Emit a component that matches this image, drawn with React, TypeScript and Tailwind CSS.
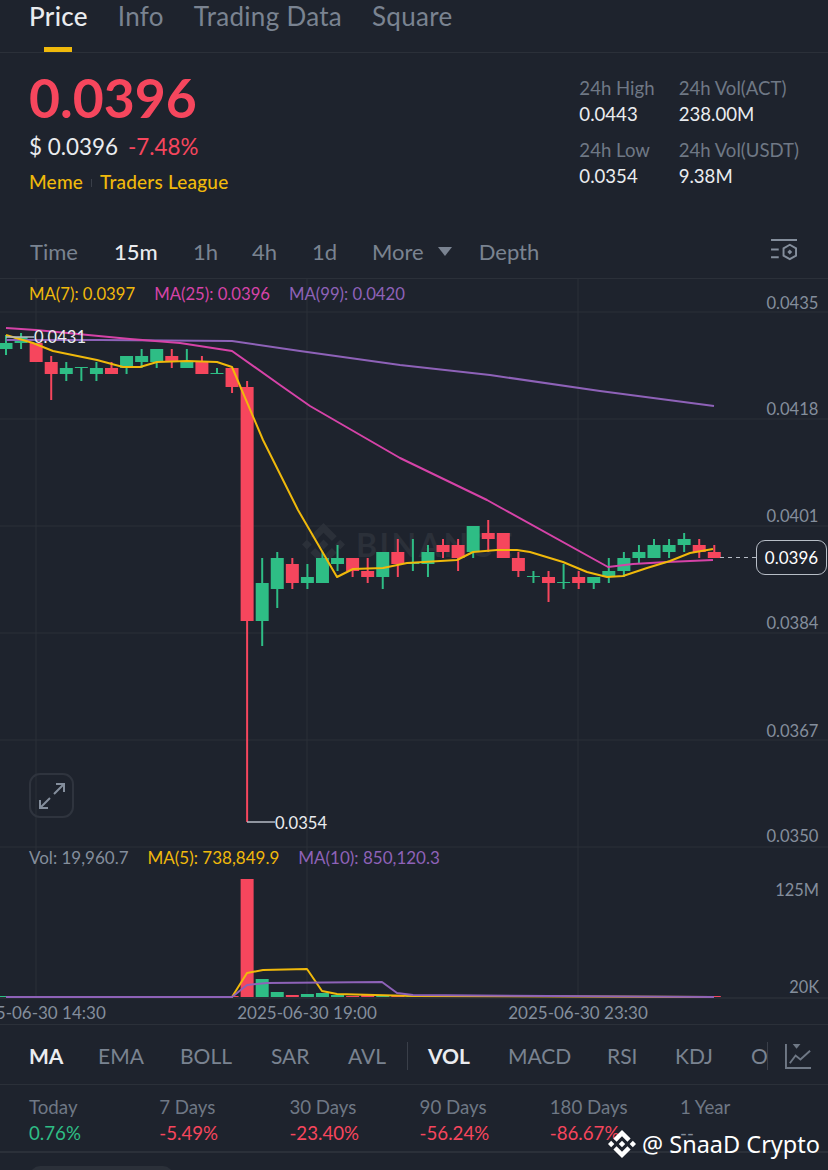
import React from 'react';

const UP = '#2ebd85';
const DOWN = '#f6465d';

// [up?, wick top, body top, body bottom, wick bottom]
const candles: [boolean, number, number, number, number][] = [
  [true, 335, 343, 349, 355],
  [true, 333, 337, 343, 349],
  [false, 343, 343, 362, 362],
  [false, 356, 362, 374, 400],
  [true, 362, 368, 374, 381],
  [true, 367, 367, 368, 381],
  [true, 362, 368, 374, 381],
  [false, 362, 368, 374, 374],
  [true, 356, 356, 368, 374],
  [true, 349, 356, 362, 368],
  [true, 349, 349, 362, 368],
  [false, 349, 356, 362, 368],
  [true, 349, 362, 368, 368],
  [false, 356, 362, 374, 374],
  [true, 368, 373, 374, 374],
  [false, 368, 368, 387, 393],
  [false, 381, 387, 621, 822],
  [true, 558, 583, 621, 646],
  [true, 552, 558, 589, 608],
  [false, 558, 564, 583, 589],
  [true, 564, 577, 583, 589],
  [true, 552, 558, 583, 583],
  [true, 545, 558, 564, 571],
  [false, 558, 558, 571, 577],
  [false, 558, 571, 577, 583],
  [true, 552, 552, 577, 589],
  [false, 539, 552, 564, 577],
  [true, 539, 563, 564, 571],
  [true, 545, 552, 564, 577],
  [false, 539, 545, 552, 558],
  [false, 539, 545, 558, 571],
  [true, 526, 526, 552, 558],
  [false, 520, 533, 539, 552],
  [false, 533, 533, 558, 558],
  [false, 552, 558, 571, 577],
  [true, 571, 576, 577, 583],
  [false, 571, 577, 583, 602],
  [true, 564, 582, 583, 589],
  [false, 571, 577, 583, 589],
  [true, 577, 577, 583, 589],
  [true, 558, 571, 577, 583],
  [true, 552, 558, 571, 577],
  [true, 545, 552, 558, 564],
  [true, 539, 545, 558, 558],
  [true, 539, 545, 552, 558],
  [true, 533, 539, 545, 552],
  [false, 539, 545, 552, 558],
  [false, 545, 552, 558, 558],
];

// height of each volume bar above the baseline
const volumes = [1, 1, 1, 1, 1, 1, 1, 1, 1, 1, 1, 1, 1, 1, 1, 1, 118, 18, 5, 2, 3, 4, 2, 1, 2, 2, 1, 1, 2, 2, 1, 1, 2, 2, 2, 1, 1, 1, 1, 1, 1, 1, 1, 1, 1, 1, 1, 1];

const cx = (i: number) => 6 + i * 15.07;

const ma7 = '6,335 33,343 53,351 97,360 123,367 140,367 157,362 187,361 217,362 232,367 263,440 298,510 337,577 353,569 383,568 407,563 457,560 473,552 497,550 517,550 530,552 563,562 587,572 607,577 623,576 647,568 670,561 690,553 713,549';
const ma25 = '6,328 36,330 130,339 180,343 232,351 280,385 310,406 400,458 487,500 505,510 608,567 633,564 667,562 713,560';
const ma99 = '6,340 100,340 232,341 300,351 400,365 490,375 600,391 714,406';
const volMa5 = '6,997 232,997 247,973 263,970 307,969 322,991 337,994 413,996 714,997';
const volMa10 = '6,997 232,997 247,985 267,983 382,982 397,993 413,995 714,997';

const gridY = [312, 419, 526, 633, 740, 847];
const gridX = [36, 307, 578];
const priceLabels: [string, number][] = [
  ['0.0435', 309],
  ['0.0418', 415],
  ['0.0401', 522],
  ['0.0384', 629],
  ['0.0367', 737],
  ['0.0350', 842],
];

const logoPath = 'M38.73 53.2l24.59-24.58 24.6 24.6 14.3-14.31L63.32 0 24.43 38.9zM0 63.31l14.3-14.31 14.31 14.31-14.31 14.3zM38.73 73.41l24.59 24.59 24.6-24.6 14.31 14.29-38.9 38.91-38.91-38.88zM98 63.31l14.3-14.31 14.31 14.3-14.31 14.32zM77.83 63.3L63.32 48.78 48.81 63.28l14.51 14.5z';

function Chart() {
  return (
    <div className="relative h-[746px] border-b border-[#2b3039]">
      <svg viewBox="0 279 828 745" className="block w-[828px] h-[745px]">
        {gridY.map(y => (
          <line key={y} x1={0} x2={828} y1={y} y2={y} stroke="#2b3039" />
        ))}
        <line x1={0} x2={828} y1={998} y2={998} stroke="#2b3039" strokeWidth={1.5} />
        {gridX.map(x => (
          <line key={x} x1={x} x2={x} y1={279} y2={998} stroke="#2b3039" />
        ))}

        {/* faint watermark behind the candles */}
        <path d={logoPath} fill="#2b3039" transform="translate(302 523) scale(0.34)" />
        <text x={356} y={557} fill="#2b3039" fontSize={32} fontWeight={700} letterSpacing={2.5}>BINANCE</text>

        {candles.map(([up, top, bodyTop, bodyBottom, bottom], i) => {
          const color = up ? UP : DOWN;
          return (
            <g key={i}>
              <line x1={cx(i)} x2={cx(i)} y1={top} y2={bottom} stroke={color} strokeWidth={2} />
              <rect x={cx(i) - 6.5} y={bodyTop} width={13} height={Math.max(bodyBottom - bodyTop, 1)} fill={color} />
            </g>
          );
        })}

        <polyline points={ma99} fill="none" stroke="#8e62b8" strokeWidth={2} strokeLinejoin="round" />
        <polyline points={ma25} fill="none" stroke="#d643a8" strokeWidth={2} strokeLinejoin="round" />
        <polyline points={ma7} fill="none" stroke="#f0b90b" strokeWidth={2} strokeLinejoin="round" />

        {/* high / low markers */}
        <line x1={6} x2={34} y1={337} y2={337} stroke="#b7bdc6" strokeWidth={1.5} />
        <text x={34} y={342.5} fill="#eaecef" fontSize={16.6}>0.0431</text>
        <line x1={247} x2={275} y1={822} y2={822} stroke="#b7bdc6" strokeWidth={1.5} />
        <text x={275} y={829} fill="#eaecef" fontSize={16.6}>0.0354</text>

        {/* last price */}
        <line x1={720} x2={756} y1={557.5} y2={557.5} stroke="#b7bdc6" strokeWidth={1.2} strokeDasharray="4 4" />

        {priceLabels.map(([label, y]) => (
          <text key={label} x={818.5} y={y} textAnchor="end" fill="#848e9c" fontSize={16.6}>{label}</text>
        ))}
        <text x={819} y={896} textAnchor="end" fill="#848e9c" fontSize={16.4}>125M</text>
        <text x={819} y={993} textAnchor="end" fill="#848e9c" fontSize={16.4}>20K</text>

        {/* volume */}
        {candles.map(([up], i) => (
          <rect key={i} x={cx(i) - 6.5} y={997 - volumes[i]} width={13} height={volumes[i]} fill={up ? UP : DOWN} />
        ))}
        <polyline points={volMa5} fill="none" stroke="#f0b90b" strokeWidth={2} strokeLinejoin="round" />
        <polyline points={volMa10} fill="none" stroke="#8e62b8" strokeWidth={2} strokeLinejoin="round" />

        <text x={36} y={1019} textAnchor="middle" fill="#848e9c" fontSize={17}>2025-06-30 14:30</text>
        <text x={307} y={1019} textAnchor="middle" fill="#848e9c" fontSize={17}>2025-06-30 19:00</text>
        <text x={578} y={1019} textAnchor="middle" fill="#848e9c" fontSize={17}>2025-06-30 23:30</text>
      </svg>

      <div className="absolute left-[29px] top-[5px] flex gap-[19px] text-[16.7px] leading-5">
        <span className="text-[#f0b90b]">MA(7): 0.0397</span>
        <span className="text-[#d643a8]">MA(25): 0.0396</span>
        <span className="text-[#8e62b8]">MA(99): 0.0420</span>
      </div>

      <div className="absolute left-[29px] top-[569px] flex gap-[19px] text-[17px] leading-5">
        <span className="text-[#848e9c]">Vol: 19,960.7</span>
        <span className="text-[#f0b90b]">MA(5): 738,849.9</span>
        <span className="text-[#8e62b8]">MA(10): 850,120.3</span>
      </div>

      <div className="absolute right-[1px] top-[261px] w-[71px] h-[35px] flex items-center justify-center rounded-[9px] border border-[#b7bdc6] bg-[#1e232d] text-white text-[17px]">
        0.0396
      </div>

      <div className="absolute left-[29px] top-[494px] w-[45px] h-[45px] flex items-center justify-center rounded-[11px] border-2 border-[#2f343e]">
        <svg viewBox="0 0 32 32" className="w-[32px] h-[32px]" fill="none" stroke="#848e9c" strokeWidth={2}>
          <path d="M18 14 L28 4 M20 4 h8 v8" />
          <path d="M14 18 L4 28 M4 20 v8 h8" />
        </svg>
      </div>
    </div>
  );
}

const Stat = ({ label, value }: { label: string; value: string }) => (
  <div className="leading-[26px] text-[18.6px]">
    <div className="text-[#6f7885]">{label}</div>
    <div className="text-[#eaecef]">{value}</div>
  </div>
);

const periods: [string, string, string][] = [
  ['Today', '0.76%', 'text-[#2ebd85]'],
  ['7 Days', '-5.49%', 'text-[#f6465d]'],
  ['30 Days', '-23.40%', 'text-[#f6465d]'],
  ['90 Days', '-56.24%', 'text-[#f6465d]'],
  ['180 Days', '-86.67%', 'text-[#f6465d]'],
  ['1 Year', '--', 'text-[#848e9c]'],
];

export default function App() {
  return (
    <div className="relative w-[828px] h-[1170px] overflow-hidden bg-[#1e232d] font-['Lato',sans-serif]">
      <div className="h-[53px] flex gap-[30px] pl-[29px] border-b border-[#2b3039] text-[26px] tracking-[0.3px] leading-[32px] text-[#7a8391]">
        <div className="relative h-[52px]">
          <span className="text-[#eaecef] font-medium">Price</span>
          <div className="absolute left-[15px] bottom-0 w-[28px] h-[5px] bg-[#f0b90b]" />
        </div>
        <span>Info</span>
        <span>Trading Data</span>
        <span>Square</span>
      </div>

      <div className="h-[167px] flex justify-between pl-[29px] pr-[29px]">
        <div className="pt-[12px]">
          <div className="text-[#f6465d] text-[53.5px] font-bold leading-[64px]">0.0396</div>
          <div className="flex gap-[10px] text-[22.4px] leading-[32px] mt-[2px]">
            <span className="text-[#eaecef]">$ 0.0396</span>
            <span className="text-[#f6465d]">-7.48%</span>
          </div>
          <div className="flex items-center gap-[8px] text-[#f0b90b] text-[19px] tracking-[0.2px] font-medium leading-[26px] mt-[6px]">
            <span>Meme</span>
            <span className="w-px h-[8px] bg-[#3a3f49] mt-[2px]" />
            <span>Traders League</span>
          </div>
        </div>
        <div className="grid grid-cols-[auto_auto] gap-x-[24px] gap-y-[10px] pt-[22px] self-start">
          <Stat label="24h High" value="0.0443" />
          <Stat label="24h Vol(ACT)" value="238.00M" />
          <Stat label="24h Low" value="0.0354" />
          <Stat label="24h Vol(USDT)" value="9.38M" />
        </div>
      </div>

      <div className="h-[59px] flex items-center pt-[4px] pl-[30px] pr-[30px] border-b border-[#2b3039] text-[22px] text-[#7a8391]">
        <span className="w-[84px]">Time</span>
        <span className="w-[79px] text-[#eaecef] font-medium">15m</span>
        <span className="w-[59px]">1h</span>
        <span className="w-[60px]">4h</span>
        <span className="w-[60px]">1d</span>
        <span>More</span>
        <span className="ml-[14px] w-0 h-0 border-l-[7px] border-r-[7px] border-t-[9px] border-l-transparent border-r-transparent border-t-[#7a8391]" />
        <span className="ml-[27px]">Depth</span>
        <svg viewBox="0 0 28 26" className="ml-auto w-[27px] h-[25px]" fill="none" stroke="#848e9c" strokeWidth={2}>
          <path d="M0 1h27M0 11h8M0 19h8" />
          <path d="M19.5 6l6.5 3.7v7.6l-6.5 3.7-6.5-3.7v-7.6z" />
          <path d="M19.5 11l2.5 2.5-2.5 2.5-2.500-2.500z" fill="#848e9c" stroke="none" />
        </svg>
      </div>

      <Chart />

      <div className="h-[60px] flex items-center pt-[3px] border-b border-[#2b3039] pl-[29px] text-[21px] text-[#7a8391]">
        <span className="w-[69px] text-[#eaecef] font-bold">MA</span>
        <span className="w-[82px]">EMA</span>
        <span className="w-[91px]">BOLL</span>
        <span className="w-[77px]">SAR</span>
        <span className="w-[59px]">AVL</span>
        <span className="w-px h-[28px] bg-[#3a3f49] mr-[20px]" />
        <span className="w-[80px] text-[#eaecef] font-bold">VOL</span>
        <span className="w-[99px]">MACD</span>
        <span className="w-[68px]">RSI</span>
        <span className="w-[76px]">KDJ</span>
        <span className="w-[16px] overflow-hidden">OBV</span>
        <span className="w-px h-[28px] bg-[#3a3f49] mr-[17px]" />
        <svg viewBox="0 0 28 28" className="w-[27px] h-[27px]" fill="none" stroke="#6f7885" strokeWidth={2}>
          <path d="M1 1v25h26" />
          <path d="M5 21l6-8 5 4 10-9" />
          <path d="M8 1h8l-4 5z" fill="#6f7885" stroke="none" />
        </svg>
      </div>

      <div className="h-[68px] flex pl-[29px] pt-[9px] border-b-2 border-[#2b3039]">
        {periods.map(([label, value, color]) => (
          <div key={label} className="w-[130.2px] leading-[26px] text-[18.7px]">
            <div className="text-[#6f7885]">{label}</div>
            <div className={color}>{value}</div>
          </div>
        ))}
      </div>

      <div className="mt-[13px] ml-[30px] w-[143px] h-[20px] rounded-t-[10px] bg-[#2b3039]" />

      {/* watermark of the screenshot */}
      <div className="absolute left-[608px] top-[1128px] flex items-center gap-[6px] font-['Noto_Sans',sans-serif] text-white text-[23.5px] leading-[32px] whitespace-nowrap">
        <svg viewBox="0 0 126.61 126.61" className="w-[28px] h-[28px]" fill="#ffffff">
          <path d={logoPath} />
        </svg>
        <span>@ SnaaD Crypto</span>
      </div>
    </div>
  );
}
